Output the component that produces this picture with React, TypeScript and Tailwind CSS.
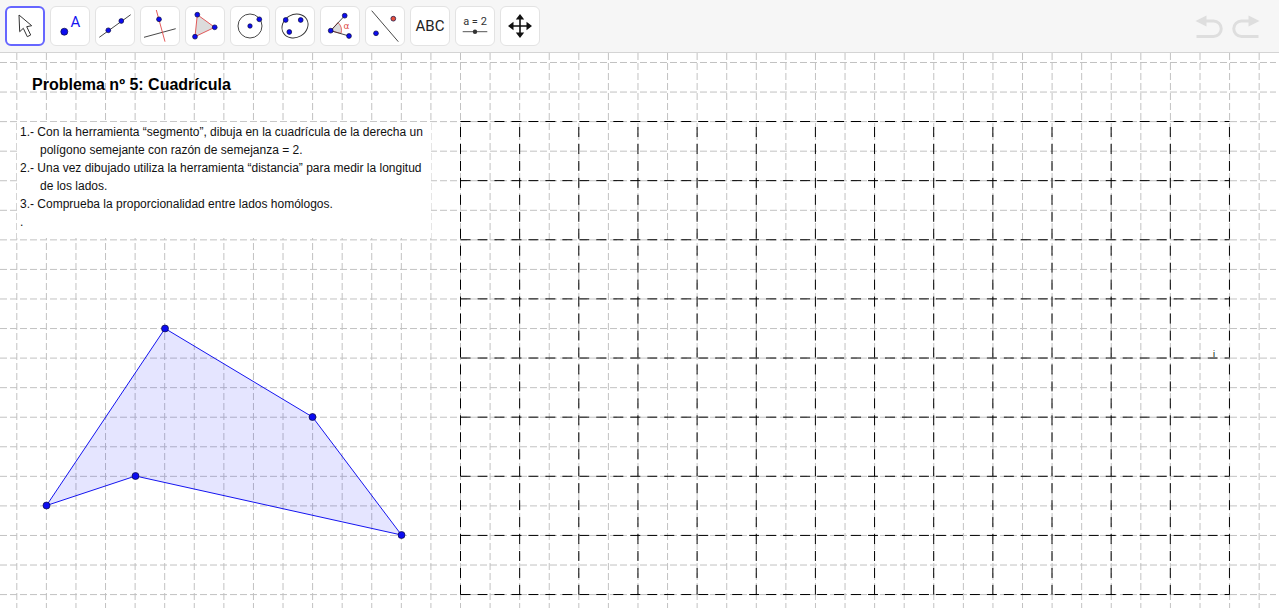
const GRID_X = Array.from({ length: 43 }, (_, i) => 16.8 + i * 29.58)
const GRID_Y = Array.from({ length: 19 }, (_, i) => 62.5 + i * 29.56)
const BOX_X = Array.from({ length: 14 }, (_, i) => 460.5 + i * 59.15)
const BOX_Y = Array.from({ length: 9 }, (_, i) => 121.5 + i * 59.13)
const VERTS = [
  [46.5, 505.5],
  [165, 328.5],
  [312.5, 417],
  [401.5, 535],
  [135.5, 476],
]

function Dot({ x, y, r = 3, fill = "#0c0cf0" }: { x: number; y: number; r?: number; fill?: string }) {
  return <circle cx={x} cy={y} r={r} fill={fill} stroke="#0a0a40" strokeWidth={0.7} />
}

function Tool({ active, children }: { active?: boolean; children: React.ReactNode }) {
  return (
    <div
      className={
        active
          ? "h-10 w-10 rounded-md border-2 border-[#6666ff] bg-white"
          : "h-10 w-10 rounded-md border border-[#e3e3e3] bg-white"
      }
    >
      <svg viewBox={active ? "2 2 36 36" : "1 1 38 38"} className="h-full w-full">
        {children}
      </svg>
    </div>
  )
}

function Toolbar() {
  return (
    <div className="flex h-[53px] w-[1279px] shrink-0 items-center justify-between border-b border-[#d4d4d4] bg-[#f6f6f6] pb-[1px] pl-[5px] pr-[15px]">
      <div className="flex gap-[5px]">
        <Tool active>
          <path d="M14 9 L14.7 25.7 L18.3 22.3 L22.3 30.7 L25.7 29 L21.7 20.7 L26.7 19.7 Z" fill="#fff" stroke="#333" strokeWidth={1} />
        </Tool>
        <Tool>
          <Dot x={14.3} y={25.7} r={3.5} />
          <text x={20.5} y={20.5} fontSize={15} fill="#1414f0" fontFamily="Roboto, sans-serif">A</text>
        </Tool>
        <Tool>
          <line x1={4.3} y1={31.3} x2={35.7} y2={8.7} stroke="#333" strokeWidth={0.9} />
          <Dot x={13.3} y={24.3} r={2.4} />
          <Dot x={26.3} y={15} r={2.4} />
        </Tool>
        <Tool>
          <line x1={4} y1={31.3} x2={35.7} y2={22.7} stroke="#333" strokeWidth={0.9} />
          <line x1={16.3} y1={4} x2={25} y2={35.7} stroke="#e04848" strokeWidth={0.9} />
          <Dot x={19} y={13.3} r={2.4} />
        </Tool>
        <Tool>
          <polygon points="12.3,8.7 29.7,21.3 10,30.7" fill="#dcdcdc" stroke="#e04848" strokeWidth={0.9} />
          <Dot x={12.3} y={8.7} r={2.4} />
          <Dot x={29.7} y={21.3} r={2.4} />
          <Dot x={10} y={30.7} r={2.4} />
        </Tool>
        <Tool>
          <circle cx={20} cy={20} r={12} fill="none" stroke="#333" strokeWidth={0.9} />
          <Dot x={20} y={20} r={2.2} />
          <Dot x={29.3} y={13.3} r={2.4} />
        </Tool>
        <Tool>
          <ellipse cx={20} cy={20} rx={13.5} ry={11.5} transform="rotate(-30 20 20)" fill="none" stroke="#333" strokeWidth={0.9} />
          <Dot x={10.7} y={14} r={2.4} />
          <Dot x={25.7} y={14} r={2.4} />
          <Dot x={14.3} y={26} r={2.4} />
        </Tool>
        <Tool>
          <path d="M10.7 24.7 L18 16.5 A11 11 0 0 1 21 27.5 Z" fill="#dcdcdc" stroke="#e04848" strokeWidth={0.8} />
          <line x1={10.7} y1={24.7} x2={24.7} y2={9.7} stroke="#333" strokeWidth={0.9} />
          <line x1={10.7} y1={24.7} x2={29} y2={30} stroke="#333" strokeWidth={0.9} />
          <Dot x={10.7} y={24.7} r={2.4} />
          <Dot x={24.7} y={9.7} r={2.4} />
          <Dot x={29} y={30} r={2.4} />
          <text x={23.5} y={23} fontSize={9} fill="#e04848" fontFamily="DejaVu Sans, sans-serif">α</text>
        </Tool>
        <Tool>
          <line x1={6.7} y1={4.7} x2={33.3} y2={35.7} stroke="#333" strokeWidth={0.9} />
          <Dot x={11} y={27.3} r={2.4} />
          <Dot x={28.3} y={12.7} r={2.4} fill="#e8503c" />
        </Tool>
        <Tool>
          <text x={20} y={25} fontSize={15} textAnchor="middle" fill="#222" fontFamily="Roboto, sans-serif">ABC</text>
        </Tool>
        <Tool>
          <text x={20} y={19} fontSize={11} textAnchor="middle" fill="#333" fontFamily="Roboto, sans-serif">a = 2</text>
          <line x1={7.7} y1={25.7} x2={32.3} y2={25.7} stroke="#555" strokeWidth={1} />
          <circle cx={20} cy={25.7} r={2.2} fill="#333" />
        </Tool>
        <Tool>
          <path d="M20 11 V29 M11 20 H29" stroke="#111" strokeWidth={1.6} />
          <path d="M20 8 L24.2 13.5 H15.8 Z M20 32 L24.2 26.5 H15.8 Z M8 20 L13.5 15.8 V24.2 Z M32 20 L26.5 15.8 V24.2 Z" fill="#111" />
        </Tool>
      </div>
      <div className="flex gap-[5px] pt-[1px]">
        <svg width="32" height="26" viewBox="0 0 32 26" fill="none">
          <path d="M0.5 8 L11.5 2.5 V13.5 Z" fill="#dedede" />
          <path d="M9 8 H18.5 A7.5 7.5 0 0 1 18.5 23.5 H1.5" stroke="#dedede" strokeWidth={3} />
        </svg>
        <svg width="32" height="26" viewBox="0 0 32 26" fill="none">
          <path d="M27.5 8 L16.5 2.5 V13.5 Z" fill="#dedede" />
          <path d="M19 8 H9.5 A7.5 7.5 0 0 0 9.5 23.5 H26.5" stroke="#dedede" strokeWidth={3} />
        </svg>
      </div>
    </div>
  )
}

function Board() {
  return (
    <svg viewBox="0 53 1280 555" className="absolute inset-0 h-full w-full">
      {GRID_X.map((x) => (
        <line key={x} x1={x} y1={53} x2={x} y2={608} stroke="#c2c2c2" strokeWidth={1} strokeDasharray="7 3" />
      ))}
      {GRID_Y.map((y) => (
        <line key={y} x1={0} y1={y} x2={1276} y2={y} stroke="#c2c2c2" strokeWidth={1} strokeDasharray="7 3" />
      ))}
      {BOX_X.map((x) => (
        <line key={x} x1={x} y1={121.5} x2={x} y2={594.6} stroke="#000" strokeWidth={1} strokeDasharray="10 6.96" strokeDashoffset={11.46} />
      ))}
      {BOX_Y.map((y) => (
        <line key={y} x1={460.5} y1={y} x2={1229.6} y2={y} stroke="#000" strokeWidth={1} strokeDasharray="10 6.98" />
      ))}
      <polygon points={VERTS.map((p) => p.join(",")).join(" ")} fill="#0000ff" fillOpacity={0.1} stroke="#1414f0" strokeWidth={1} />
      {VERTS.map(([x, y]) => (
        <Dot key={x} x={x} y={y} r={3.5} />
      ))}
      <text x={1214} y={357} fontSize={9} textAnchor="middle" fill="#000" fontFamily="Liberation Sans, sans-serif">i</text>
    </svg>
  )
}

export default function App() {
  return (
    <div className="flex h-[608px] w-full flex-col overflow-hidden bg-white font-['Liberation_Sans',sans-serif] text-black">
      <Toolbar />
      <div className="relative flex-1">
        <Board />
        <h1 className="absolute left-8 top-[22px] text-base font-bold leading-[20px]">Problema nº 5: Cuadrícula</h1>
        <div className="absolute left-[17px] top-[69px] h-[116px] w-[414px] bg-white pl-[3px] pt-px text-xs leading-[18px] text-[#111]">
          <p>1.- Con la herramienta “segmento”, dibuja en la cuadrícula de la derecha un</p>
          <p className="pl-5">polígono semejante con razón de semejanza = 2.</p>
          <p>2.- Una vez dibujado utiliza la herramienta “distancia” para medir la longitud</p>
          <p className="pl-5">de los lados.</p>
          <p>3.- Comprueba la proporcionalidad entre lados homólogos.</p>
          <p>.</p>
        </div>
      </div>
    </div>
  )
}
